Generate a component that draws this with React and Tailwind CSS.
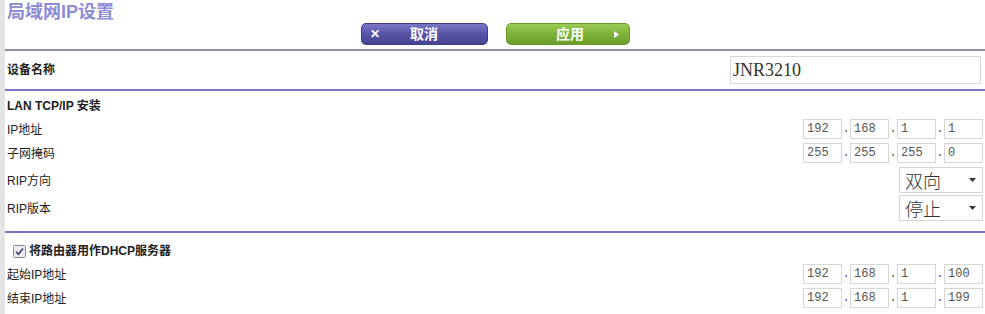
import React from 'react';

const sans = { fontFamily: '"Liberation Sans", "Noto Sans CJK SC", sans-serif' };

const IpBoxes = ({ parts }) => (
  <div className="flex items-center">
    {parts.map((p, i) => (
      <div key={i} className="flex items-center">
        {i > 0 && <span className="w-[8px] text-center text-[12px] text-[#555] font-['Liberation_Mono',monospace]">.</span>}
        <div className="w-[39px] h-[20px] border border-[#d6d6d6] bg-white pl-[3px] text-[12px] leading-[18px] text-[#555] font-['Liberation_Mono',monospace]">
          {p}
        </div>
      </div>
    ))}
  </div>
);

const SelectBox = ({ value }) => (
  <div className="w-[84px] h-[26px] border border-[#d6d6d6] bg-white flex items-center justify-between pl-[5px] pr-[6px]">
    <span className="text-[18px] leading-none text-[#333] font-light font-['Noto_Sans_CJK_SC',sans-serif]">{value}</span>
    <svg width="7" height="4" viewBox="0 0 7 4"><path d="M0 0h7L3.5 4z" fill="#333" /></svg>
  </div>
);

const Row = ({ label, h, children, bold }) => (
  <div className={`flex items-center justify-between pr-[2px] ${h}`}>
    <span className={`pl-[2px] pt-[2px] text-[12px] text-[#222] ${bold ? 'font-bold' : ''}`}>{label}</span>
    {children}
  </div>
);

export default function App() {
  return (
    <div className="flex w-[985px] h-[314px] bg-white overflow-hidden" style={sans}>
      <div className="w-[5px] shrink-0 bg-[#e4e4e4]" />
      <div className="flex-1 flex flex-col">
        {/* header */}
        <div className="h-[23px] pl-[2px] pt-[3px] text-[18px] leading-[19px] font-bold text-[#908bd6]">局域网IP设置</div>
        <div className="h-[22px] flex justify-center gap-[18px]">
          <button className="w-[127px] h-[22px] rounded-[5px] border border-[#3f3c86] bg-gradient-to-b from-[#7a77c8] via-[#5754a8] to-[#46438f] flex items-center px-[8px] text-white">
            <span className="text-[12px] font-bold leading-none">✕</span>
            <span className="flex-1 text-center text-[14px] font-bold pr-[10px]">取消</span>
          </button>
          <button className="w-[124px] h-[22px] rounded-[5px] border border-[#6a9a2c] bg-gradient-to-b from-[#9ccc55] via-[#7fb23a] to-[#6a9e2a] flex items-center pl-[8px] pr-[10px] text-white">
            <span className="flex-1 text-center text-[14px] font-bold pl-[12px]">应用</span>
            <svg width="5" height="7" viewBox="0 0 5 7"><path d="M0 0l5 3.5L0 7z" fill="#fff" /></svg>
          </button>
        </div>
        <div className="h-[4px]" />
        <div className="h-[2px] bg-[#8e8aa8]" />

        {/* device name */}
        <div className="h-[38px] flex items-center justify-between pr-[4px]">
          <span className="pl-[2px] text-[12px] font-bold text-[#222]">设备名称</span>
          <div className="w-[251px] h-[28px] border border-[#d8d8d8] pl-[2px] text-[18px] leading-[26px] text-[#333] font-['Liberation_Serif',serif]">JNR3210</div>
        </div>
        <div className="h-[2px] bg-[#7c74c8]" />

        {/* LAN TCP/IP */}
        <div className="h-[26px] flex items-end pl-[2px] pb-[2px] text-[12px] font-bold text-[#222]">LAN TCP/IP 安装</div>
        <Row label="IP地址" h="h-[24px]"><IpBoxes parts={['192', '168', '1', '1']} /></Row>
        <Row label="子网掩码" h="h-[24px]"><IpBoxes parts={['255', '255', '255', '0']} /></Row>
        <Row label="RIP方向" h="h-[29px]"><SelectBox value="双向" /></Row>
        <Row label="RIP版本" h="h-[27px]"><SelectBox value="停止" /></Row>
        <div className="h-[10px]" />
        <div className="h-[2px] bg-[#7c74c8]" />

        {/* DHCP */}
        <div className="h-[29px] flex items-end pl-[8px] pb-[4px] gap-[3px]">
          <svg width="13" height="13" viewBox="0 0 13 13">
            <rect x="0.5" y="0.5" width="12" height="12" rx="1" fill="#eeeef2" stroke="#8a8a8a" />
            <path d="M3 6.8l2.4 2.4L10 3.5" fill="none" stroke="#3b3b6b" strokeWidth="1.6" />
          </svg>
          <span className="text-[12px] leading-[14px] font-bold text-[#222]">将路由器用作DHCP服务器</span>
        </div>
        <Row label="起始IP地址" h="h-[24px]"><IpBoxes parts={['192', '168', '1', '100']} /></Row>
        <Row label="结束IP地址" h="h-[24px]"><IpBoxes parts={['192', '168', '1', '199']} /></Row>
      </div>
    </div>
  );
}
